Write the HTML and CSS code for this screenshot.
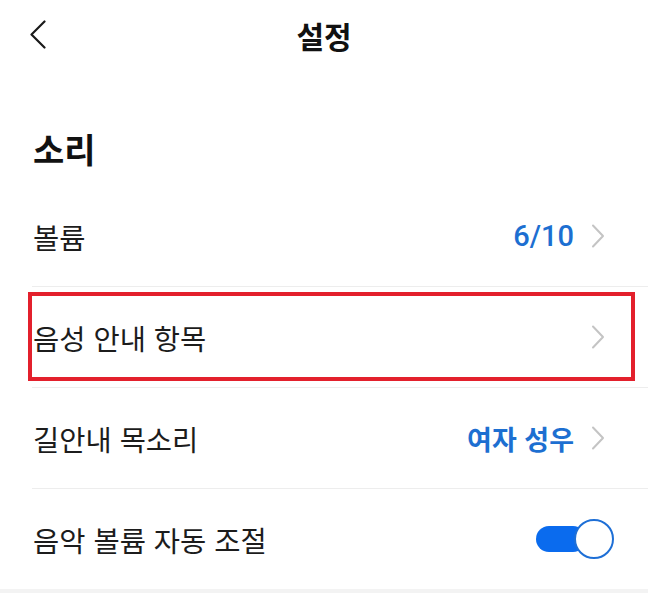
FILE: index.html
```html
<!DOCTYPE html>
<html lang="ko">
<head>
<meta charset="utf-8">
<link rel="stylesheet" href="styles.css">
</head>
<body>
<div class="page">
  <header class="topbar">
    <span class="back">
      <svg width="20" height="30" viewBox="0 0 20 30"><polyline points="15.5,1.5 2.5,14.5 15.5,27.5" fill="none" stroke="#1a1a1a" stroke-width="2.2" stroke-linecap="round" stroke-linejoin="round"/></svg>
    </span>
    <h1 class="title">설정</h1>
  </header>

  <h2 class="section">소리</h2>

  <div class="list">
    <div class="row">
      <span class="label">볼륨</span>
      <span class="right"><span class="value num">6/10</span><span class="chev"><svg width="14" height="24" viewBox="0 0 14 24"><polyline points="2,1.5 12,12 2,22.5" fill="none" stroke="#c4c4c4" stroke-width="2" stroke-linecap="round" stroke-linejoin="round"/></svg></span></span>
    </div>
    <div class="row highlighted">
      <span class="label">음성 안내 항목</span>
      <span class="right"><span class="chev"><svg width="14" height="24" viewBox="0 0 14 24"><polyline points="2,1.5 12,12 2,22.5" fill="none" stroke="#c4c4c4" stroke-width="2" stroke-linecap="round" stroke-linejoin="round"/></svg></span></span>
      <span class="mark"></span>
    </div>
    <div class="row">
      <span class="label">길안내 목소리</span>
      <span class="right"><span class="value">여자 성우</span><span class="chev"><svg width="14" height="24" viewBox="0 0 14 24"><polyline points="2,1.5 12,12 2,22.5" fill="none" stroke="#c4c4c4" stroke-width="2" stroke-linecap="round" stroke-linejoin="round"/></svg></span></span>
    </div>
    <div class="row last">
      <span class="label">음악 볼륨 자동 조절</span>
      <span class="toggle"><span class="track"></span><span class="knob"></span></span>
    </div>
  </div>
  <div class="footer-band"></div>
</div>
</body>
</html>
```
FILE: styles.css
```css
html, body {
  margin: 0;
  padding: 0;
  background: #ffffff;
}
body {
  font-family: "Noto Sans CJK KR", "Noto Sans", sans-serif;
  color: #1a1a1a;
}
.page {
  width: 648px;
  height: 593px;
  overflow: hidden;
  display: flex;
  flex-direction: column;
}
.topbar {
  height: 70px;
  display: flex;
  align-items: center;
  justify-content: center;
  position: relative;
}
.back {
  position: absolute;
  left: 29px;
  top: 20px;
  display: flex;
}
.title {
  margin: 0;
  font-size: 30px;
  font-weight: 700;
  line-height: 1;
  color: #111;
}
.section {
  margin: 54px 0 0 33px;
  font-size: 34px;
  font-weight: 700;
  line-height: 50px;
  height: 50px;
  color: #111;
}
.list {
  margin-top: 12px;
}
.row {
  height: 100px;
  border-bottom: 1px solid #ededed;
  margin-left: 32px;
  padding-right: 43px;
  display: flex;
  align-items: center;
  justify-content: space-between;
  position: relative;
}
.row.last {
  border-bottom: none;
  padding-right: 34px;
}
.label {
  font-size: 28.5px;
  font-weight: 400;
  padding-left: 1px;
  color: #1c1c1c;
}
.right {
  display: flex;
  align-items: center;
  gap: 17px;
}
.value {
  font-size: 27px;
  font-weight: 700;
  color: #1d6fd1;
}
.value.num {
  font-family: "Roboto", "Noto Sans", sans-serif;
  font-size: 29px;
  font-weight: 500;
}
.chev {
  display: flex;
}
.mark {
  position: absolute;
  left: -4px;
  top: 5px;
  width: 599px;
  height: 81px;
  border: 4px solid #e3202c;
}
.toggle {
  position: relative;
  width: 80px;
  height: 40px;
}
.track {
  position: absolute;
  left: 2px;
  top: 7px;
  width: 50px;
  height: 26px;
  border-radius: 13px;
  background: #0a6bee;
}
.knob {
  position: absolute;
  right: 0;
  top: 0;
  width: 36px;
  height: 36px;
  border-radius: 50%;
  background: #ffffff;
  border: 2px solid #1e6fd6;
}
.footer-band {
  flex: 1;
  background: #f3f3f3;
}
```
